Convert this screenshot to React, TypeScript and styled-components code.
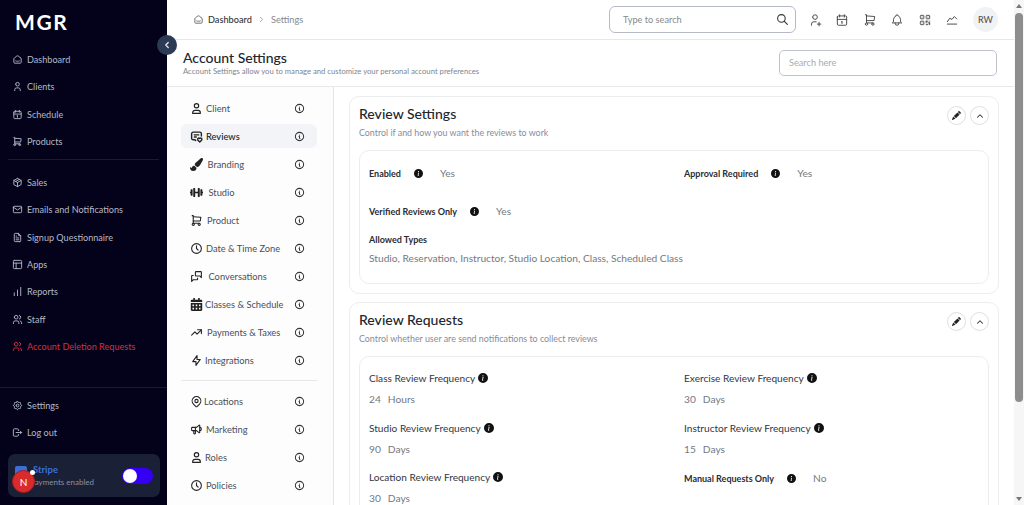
import * as React from "react";
import styled, { createGlobalStyle } from "styled-components";
import {
  TbBell,
  TbBolt,
  TbCalendar,
  TbChartLine,
  TbChevronLeft,
  TbChevronRight,
  TbChevronUp,
  TbClock,
  TbFileText,
  TbInfoCircle,
  TbLogout,
  TbMail,
  TbMapPin,
  TbMessage2Heart,
  TbMessages,
  TbPackage,
  TbQrcode,
  TbSearch,
  TbSettings,
  TbShoppingCart,
  TbSmartHome,
  TbSpeakerphone,
  TbTrendingUp,
  TbUser,
  TbUserPlus,
  TbUsers,
} from "react-icons/tb";
import { BsInfoCircleFill, BsPencilFill } from "react-icons/bs";
import { FaCalendarAlt, FaDumbbell, FaPaintBrush } from "react-icons/fa";
import { ChartNoAxesColumnIncreasing, PanelsTopLeft } from "lucide-react";

const GlobalStyle = createGlobalStyle`
  html, body { margin: 0; height: 100%; overflow: hidden; }
  body { font-family: Lato, "Noto Sans", sans-serif; background: #fff; color: #2b2f38; }
  * { box-sizing: border-box; }
`;

const PersonIcon = ({ size = 13 }: { size?: number }) => (
  <svg width={size} height={size} viewBox="0 0 24 24" fill="none" stroke="#222" strokeWidth="2.2" strokeLinejoin="round">
    <circle cx="12" cy="7" r="4" />
    <path d="M5 21v-1.500a4 4 0 0 1 4-4h6a4 4 0 0 1 4 4V21z" />
  </svg>
);

const mainNav = [
  { label: "Dashboard", icon: TbSmartHome },
  { label: "Clients", icon: TbUser },
  { label: "Schedule", icon: TbCalendar },
  { label: "Products", icon: TbShoppingCart },
];

const moreNav = [
  { label: "Sales", icon: TbPackage },
  { label: "Emails and Notifications", icon: TbMail },
  { label: "Signup Questionnaire", icon: TbFileText },
  { label: "Apps", icon: PanelsTopLeft },
  { label: "Reports", icon: ChartNoAxesColumnIncreasing },
  { label: "Staff", icon: TbUsers },
  { label: "Account Deletion Requests", icon: TbUsers, danger: true },
];

const settingsTop = [
  { label: "Client", icon: PersonIcon, gap: 3 },
  { label: "Reviews", icon: TbMessage2Heart, gap: 3, active: true },
  { label: "Branding", icon: FaPaintBrush, gap: 4.5 },
  { label: "Studio", icon: FaDumbbell, gap: 5.5 },
  { label: "Product", icon: TbShoppingCart, gap: 4 },
  { label: "Date & Time Zone", icon: TbClock, gap: 3 },
  { label: "Conversations", icon: TbMessages, gap: 5.5 },
  { label: "Classes & Schedule", icon: FaCalendarAlt, gap: 2 },
  { label: "Payments & Taxes", icon: TbTrendingUp, gap: 4 },
  { label: "Integrations", icon: TbBolt, gap: 2 },
];

const settingsBottom = [
  { label: "Locations", icon: TbMapPin, gap: 1 },
  { label: "Marketing", icon: TbSpeakerphone, gap: 3 },
  { label: "Roles", icon: PersonIcon, gap: 2 },
  { label: "Policies", icon: TbClock, gap: 3 },
];

const topIcons = [TbUserPlus, TbCalendar, TbShoppingCart, TbBell, TbQrcode, TbChartLine];

const frequencies = [
  { label: "Class Review Frequency", value: "24", unit: "Hours" },
  { label: "Exercise Review Frequency", value: "30", unit: "Days" },
  { label: "Studio Review Frequency", value: "90", unit: "Days" },
  { label: "Instructor Review Frequency", value: "15", unit: "Days" },
  { label: "Location Review Frequency", value: "30", unit: "Days" },
];

export default function App() {
  return (
    <Page>
      <GlobalStyle />
      <Sidebar>
        <Logo>MGR</Logo>
        <NavGroup>
          {mainNav.map(item => (
            <NavItem key={item.label}>
              <item.icon size={11} />
              {item.label}
            </NavItem>
          ))}
        </NavGroup>
        <NavDivider />
        <NavGroup>
          {moreNav.map(item => (
            <NavItem key={item.label} $danger={item.danger}>
              <item.icon size={11} />
              {item.label}
            </NavItem>
          ))}
        </NavGroup>
        <BottomBlock>
          <NavItem>
            <TbSettings size={11} />
            Settings
          </NavItem>
          <NavItem>
            <TbLogout size={11} />
            Log out
          </NavItem>
          <StripeCard>
            <StripeMark />
            <StripeText>
              <StripeName>Stripe</StripeName>
              <StripeStatus>Payments enabled</StripeStatus>
            </StripeText>
            <Toggle>
              <Knob />
            </Toggle>
            <Badge>N</Badge>
            <BadgeDot />
          </StripeCard>
        </BottomBlock>
        <Collapse>
          <TbChevronLeft size={10} strokeWidth={3} />
        </Collapse>
      </Sidebar>

      <Main>
        <TopBar>
          <Crumbs>
            <TbSmartHome size={11} color="#666" />
            <CrumbStrong>Dashboard</CrumbStrong>
            <TbChevronRight size={9} color="#888" />
            <CrumbMuted>Settings</CrumbMuted>
          </Crumbs>
          <TopSearch>
            Type to search
            <TbSearch size={13} color="#333" />
          </TopSearch>
          <TopIcons>
            {topIcons.map((Icon, i) => (
              <Icon key={i} size={14} color="#444" strokeWidth={1.6} />
            ))}
          </TopIcons>
          <Avatar>RW</Avatar>
        </TopBar>

        <PageHeader>
          <div>
            <PageTitle>Account Settings</PageTitle>
            <PageSub>Account Settings allow you to manage and customize your personal account preferences</PageSub>
          </div>
          <HeaderSearch>Search here</HeaderSearch>
        </PageHeader>

        <Body>
          <SettingsNav>
            {settingsTop.map(item => (
              <SettingsItem key={item.label} $active={item.active}>
                <item.icon size={13} color="#222" strokeWidth={item.active ? 2.6 : 2} />
                <SettingsLabel $gap={item.gap} $active={item.active}>
                  {item.label}
                </SettingsLabel>
                <TbInfoCircle size={11} color="#333" strokeWidth={2.2} />
              </SettingsItem>
            ))}
            <SettingsDivider />
            {settingsBottom.map(item => (
              <SettingsItem key={item.label}>
                <item.icon size={13} color="#222" />
                <SettingsLabel $gap={item.gap}>{item.label}</SettingsLabel>
                <TbInfoCircle size={11} color="#333" strokeWidth={2.2} />
              </SettingsItem>
            ))}
          </SettingsNav>

          <Content>
            <Card>
              <CardHead>
                <div>
                  <CardTitle>Review Settings</CardTitle>
                  <CardSub>Control if and how you want the reviews to work</CardSub>
                </div>
                <CardActions>
                  <RoundButton>
                    <BsPencilFill size={9} color="#222" />
                  </RoundButton>
                  <RoundButton>
                    <TbChevronUp size={10} color="#333" strokeWidth={2.5} />
                  </RoundButton>
                </CardActions>
              </CardHead>
              <Inner>
                <FieldGrid>
                  <Inline>
                    <BoldLabel>Enabled</BoldLabel>
                    <BsInfoCircleFill size={9} color="#111" />
                    <Value>Yes</Value>
                  </Inline>
                  <Inline>
                    <BoldLabel>Approval Required</BoldLabel>
                    <BsInfoCircleFill size={9} color="#111" />
                    <Value>Yes</Value>
                  </Inline>
                  <Inline>
                    <BoldLabel>Verified Reviews Only</BoldLabel>
                    <BsInfoCircleFill size={9} color="#111" />
                    <Value>Yes</Value>
                  </Inline>
                </FieldGrid>
                <AllowedLabel>Allowed Types</AllowedLabel>
                <AllowedValue>Studio, Reservation, Instructor, Studio Location, Class, Scheduled Class</AllowedValue>
              </Inner>
            </Card>

            <Card>
              <CardHead>
                <div>
                  <CardTitle>Review Requests</CardTitle>
                  <CardSub>Control whether user are send notifications to collect reviews</CardSub>
                </div>
                <CardActions>
                  <RoundButton>
                    <BsPencilFill size={9} color="#222" />
                  </RoundButton>
                  <RoundButton>
                    <TbChevronUp size={10} color="#333" strokeWidth={2.5} />
                  </RoundButton>
                </CardActions>
              </CardHead>
              <Inner>
                <FrequencyGrid>
                  {frequencies.map(f => (
                    <div key={f.label}>
                      <FrequencyLabel>
                        {f.label}
                        <BsInfoCircleFill size={10} color="#111" />
                      </FrequencyLabel>
                      <FrequencyValue>
                        <span>{f.value}</span>
                        <span>{f.unit}</span>
                      </FrequencyValue>
                    </div>
                  ))}
                  <Inline>
                    <BoldLabel>Manual Requests Only</BoldLabel>
                    <BsInfoCircleFill size={9} color="#111" />
                    <Value>No</Value>
                  </Inline>
                </FrequencyGrid>
              </Inner>
            </Card>
          </Content>
        </Body>
      </Main>

      <ScrollTrack>
        <ArrowUp />
        <Thumb />
        <ArrowDown />
      </ScrollTrack>
    </Page>
  );
}

const Page = styled.div`
  display: flex;
  height: 100vh;
  overflow: hidden;
`;

const Sidebar = styled.aside`
  position: relative;
  flex: 0 0 167px;
  display: flex;
  flex-direction: column;
  background: #03021a;
  color: #b4b9c8;
`;

const Logo = styled.div`
  height: 46px;
  padding: 8px 0 0 15px;
  font-size: 21px;
  line-height: 28px;
  font-weight: 700;
  letter-spacing: 1.6px;
  color: #fff;
`;

const NavGroup = styled.nav`
  display: flex;
  flex-direction: column;
`;

const NavItem = styled.div<{ $danger?: boolean }>`
  display: flex;
  align-items: center;
  gap: 4px;
  height: 27.33px;
  padding-left: 12px;
  font-size: 9.1px;
  white-space: nowrap;
  color: ${p => (p.$danger ? "#d3303f" : "#b4b9c8")};
`;

const NavDivider = styled.div`
  height: 1px;
  margin: 4px 8px 8.4px;
  background: #1a1b30;
`;

const BottomBlock = styled.div`
  margin-top: 26.6px;
  padding-top: 4px;
  border-top: 1px solid #1a1b30;
`;

const StripeCard = styled.div`
  position: relative;
  display: flex;
  align-items: center;
  height: 43px;
  margin: 8px 7px 0 8px;
  padding: 0 7px;
  border-radius: 7px;
  background: #1a2035;
`;

const StripeMark = styled.div`
  flex: 0 0 12px;
  height: 12px;
  margin: -8px 6px 0 0;
  border-radius: 2px;
  background: #3a6fd8;
`;

const StripeText = styled.div`
  flex: 1;
`;

const StripeName = styled.div`
  font-size: 9.5px;
  line-height: 12px;
  font-weight: 700;
  color: #3f6fd6;
`;

const StripeStatus = styled.div`
  margin: 1px 0 0 -3px;
  font-size: 8px;
  line-height: 11px;
  color: #8b90a3;
`;

const Toggle = styled.div`
  display: flex;
  align-items: center;
  width: 31px;
  height: 16px;
  padding: 0 1px;
  border-radius: 8px;
  background: #3300f5;
`;

const Knob = styled.div`
  width: 14px;
  height: 14px;
  border-radius: 50%;
  background: #fff;
`;

const Badge = styled.div`
  position: absolute;
  left: 4px;
  top: 16px;
  display: flex;
  align-items: center;
  justify-content: center;
  width: 23px;
  height: 23px;
  border: 1px solid #a81c1c;
  border-radius: 50%;
  background: #d92b2b;
  color: #fff;
  font-size: 10px;
`;

const BadgeDot = styled.div`
  position: absolute;
  left: 22px;
  top: 16px;
  width: 5px;
  height: 5px;
  border-radius: 50%;
  background: #fff;
`;

const Collapse = styled.button`
  position: absolute;
  left: 157px;
  top: 35px;
  display: flex;
  align-items: center;
  justify-content: center;
  width: 20px;
  height: 20px;
  padding: 0;
  border: 0;
  border-radius: 50%;
  background: #2c3a55;
  color: #e8ebf2;
`;

const Main = styled.main`
  flex: 1;
  min-width: 0;
  display: flex;
  flex-direction: column;
`;

const TopBar = styled.header`
  flex: 0 0 40px;
  display: flex;
  align-items: center;
  padding: 0 16px 0 26px;
  border-bottom: 1px solid #e6e7ea;
`;

const Crumbs = styled.div`
  flex: 1;
  display: flex;
  align-items: center;
  font-size: 9.2px;
`;

const CrumbStrong = styled.span`
  margin: 0 5px 0 4px;
  font-weight: 500;
  color: #333;
`;

const CrumbMuted = styled.span`
  margin-left: 5px;
  color: #888;
`;

const TopSearch = styled.div`
  display: flex;
  align-items: center;
  justify-content: space-between;
  width: 187px;
  height: 27px;
  padding: 0 6px 0 13px;
  border: 1px solid #b6bac6;
  border-radius: 6px;
  font-size: 9.2px;
  color: #888;
`;

const TopIcons = styled.div`
  display: flex;
  align-items: center;
  gap: 13.4px;
  margin: 0 0 0 12px;
`;

const Avatar = styled.div`
  display: flex;
  align-items: center;
  justify-content: center;
  width: 25px;
  height: 25px;
  margin-left: 14px;
  border-radius: 50%;
  background: #f1f2f4;
  font-size: 9px;
  font-weight: 500;
  color: #555;
`;

const PageHeader = styled.div`
  flex: 0 0 47px;
  display: flex;
  align-items: center;
  justify-content: space-between;
  padding: 0 17px 0 16px;
  border-bottom: 1px solid #e8e9ec;
`;

const PageTitle = styled.h1`
  margin: 0;
  font-size: 14px;
  line-height: 16px;
  font-weight: 500;
  color: #22252c;
`;

const PageSub = styled.p`
  margin: 0;
  font-size: 7.7px;
  line-height: 10px;
  color: #808490;
`;

const HeaderSearch = styled.div`
  display: flex;
  align-items: center;
  width: 218px;
  height: 26px;
  margin-bottom: 1px;
  padding-left: 9px;
  border: 1px solid #c0c3cd;
  border-radius: 5px;
  font-size: 9.2px;
  color: #a8abb4;
`;

const Body = styled.div`
  flex: 1;
  min-height: 0;
  display: flex;
`;

const SettingsNav = styled.div`
  flex: 0 0 167px;
  padding: 9px 16px 0 14px;
  border-right: 1px solid #e4e5e8;
  background: #fdfdfd;
`;

const SettingsItem = styled.div<{ $active?: boolean }>`
  display: flex;
  align-items: center;
  height: 24px;
  margin-bottom: 4px;
  padding: 0 12px 0 9px;
  border-radius: 6px;
  background: ${p => (p.$active ? "#f3f4f7" : "transparent")};
`;

const SettingsLabel = styled.span<{ $gap: number; $active?: boolean }>`
  flex: 1;
  margin-left: ${p => p.$gap}px;
  font-size: 9.3px;
  white-space: nowrap;
  font-weight: ${p => (p.$active ? 500 : 400)};
  color: ${p => (p.$active ? "#222" : "#4a4e58")};
`;

const SettingsDivider = styled.div`
  height: 1px;
  margin: 8px 0;
  background: #e6e7ea;
`;

const Content = styled.div`
  flex: 1;
  min-width: 0;
  padding: 9px 15px 0;
  overflow: hidden;
`;

const Card = styled.section`
  margin-bottom: 8px;
  padding: 8px 9px 9px;
  border: 1px solid #eceded;
  border-radius: 10px;
`;

const CardHead = styled.div`
  display: flex;
  justify-content: space-between;
  height: 45px;
`;

const CardTitle = styled.h2`
  margin: 0;
  font-size: 14px;
  line-height: 17px;
  font-weight: 500;
  color: #22252c;
`;

const CardSub = styled.p`
  margin: 5px 0 0;
  font-size: 8.9px;
  line-height: 12px;
  color: #888c96;
`;

const CardActions = styled.div`
  display: flex;
  gap: 4.5px;
  margin-top: 1px;
`;

const RoundButton = styled.div`
  display: flex;
  align-items: center;
  justify-content: center;
  width: 19px;
  height: 19px;
  border: 1px solid #dedfe3;
  border-radius: 50%;
`;

const Inner = styled.div`
  padding: 13px 9px 18px;
  border: 1px solid #eceded;
  border-radius: 10px;
`;

const FieldGrid = styled.div`
  display: grid;
  grid-template-columns: 315px 1fr;
  row-gap: 20px;
`;

const Inline = styled.div`
  display: flex;
  align-items: center;
  gap: 13px;
  height: 18px;
`;

const BoldLabel = styled.span`
  font-size: 9px;
  font-weight: 700;
  color: #2a2d35;
`;

const Value = styled.span`
  margin-left: 4px;
  font-size: 10.2px;
  color: #757982;
`;

const AllowedLabel = styled.div`
  margin-top: 14px;
  font-size: 9px;
  line-height: 12px;
  font-weight: 700;
  color: #2a2d35;
`;

const AllowedValue = styled.div`
  margin-top: 5px;
  font-size: 10.2px;
  line-height: 14px;
  color: #757982;
`;

const FrequencyGrid = styled.div`
  display: grid;
  grid-template-columns: 315px 1fr;
  row-gap: 14.5px;
`;

const FrequencyLabel = styled.div`
  display: flex;
  align-items: center;
  gap: 3px;
  height: 16px;
  font-size: 10.1px;
  color: #33363e;
`;

const FrequencyValue = styled.div`
  display: flex;
  gap: 7px;
  margin-top: 7px;
  font-size: 10.2px;
  line-height: 12px;
  color: #757982;
`;

const ScrollTrack = styled.div`
  flex: 0 0 10px;
  display: flex;
  flex-direction: column;
  align-items: center;
  background: #f6f6f6;
`;

const ArrowUp = styled.div`
  margin: 4px 0 5px;
  border: 3px solid transparent;
  border-top: 0;
  border-bottom: 4px solid #777;
`;

const Thumb = styled.div`
  width: 8px;
  height: 389px;
  border-radius: 4px;
  background: #8d8d8d;
`;

const ArrowDown = styled.div`
  margin-top: auto;
  margin-bottom: 4px;
  border: 3px solid transparent;
  border-bottom: 0;
  border-top: 4px solid #777;
`;
